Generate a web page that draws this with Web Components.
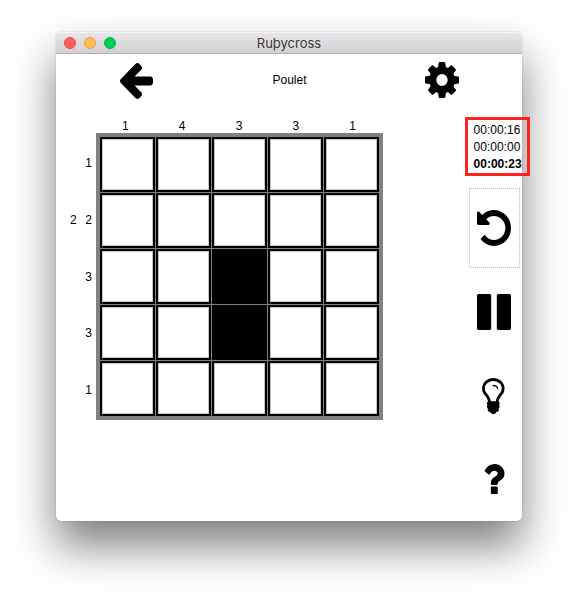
<!DOCTYPE html>
<html lang="en">
<head>
<meta charset="utf-8">
<title>Ruþycross</title>
<style>
html,body{margin:0;background:#fff}
body{width:578px;height:601px;overflow:hidden;font:12px/17px "Liberation Sans",Arial,sans-serif;color:#000}
</style>
</head>
<body>
<app-window caption="Ruþycross">
  <top-bar slot="header"><app-icon name="back"></app-icon><span>Poulet</span><app-icon name="cog"></app-icon></top-bar>
  <cross-board columns="1,4,3,3,1" rows="1;2 2;3;3;1" filled="12,17"></cross-board>
  <side-panel slot="side">
    <timer-box slot="timer"><span>00:00:16</span><span>00:00:00</span><b>00:00:23</b></timer-box>
    <tool-button focused><app-icon name="undo"></app-icon></tool-button>
    <tool-button><app-icon name="pause"></app-icon></tool-button>
    <tool-button><app-icon name="bulb"></app-icon></tool-button>
    <tool-button><app-icon name="help"></app-icon></tool-button>
  </side-panel>
</app-window>
<script>
const define = (name, template, setup) => customElements.define(name, class extends HTMLElement {
  connectedCallback() {
    if (this.shadowRoot) return;
    this.attachShadow({ mode: 'open' }).innerHTML = template;
    if (setup) setup(this, this.shadowRoot);
  }
});

define('app-window', `<style>
:host{display:flex;flex-direction:column;box-sizing:border-box;width:466px;height:489px;margin:32px 0 0 56px;background:#fff;border-radius:5px;box-shadow:0 0 1px rgba(0,0,0,.5),0 25px 44px rgba(0,0,0,.5)}
.title{display:grid;grid-template-columns:1fr auto 1fr;align-items:center;box-sizing:border-box;height:22px;flex:none;padding:0 8px;border-bottom:1px solid #b1afb1;border-radius:5px 5px 0 0;background:linear-gradient(#e9e7e9,#d2d0d2);box-shadow:inset 0 1px #f5f4f5;font:13px/21px Inter,sans-serif;color:#3b393b}
#t{padding-top:2px;line-height:19px}
.lights{display:flex;gap:8px}
i{box-sizing:border-box;width:12px;height:12px;border-radius:50%;border:1px solid #e2484a;background:#ff5f5c}
i:nth-child(2){background:#ffbe4f;border-color:#dfa046}
i:nth-child(3){background:#00ce57;border-color:#12ac4c}
.body{display:grid;grid-template-columns:409px 1fr;grid-template-rows:63px 1fr;flex:1}
.head{grid-column:1/3}
</style>
<div class="title"><div class="lights"><i></i><i></i><i></i></div><span id="t"></span></div>
<div class="body"><slot class="head" name="header"></slot><slot></slot><slot name="side"></slot></div>`,
(el, root) => { root.getElementById('t').textContent = el.getAttribute('caption'); });

define('top-bar', `<style>
:host{display:grid;grid-template-columns:34px 1fr 34px;align-items:center;grid-column:1/3;height:51px;padding:0 63px 0 64px;text-align:center}
::slotted(span){padding-top:2px}
</style><slot></slot>`);

define('cross-board', `<style>
:host{display:grid;grid-template-columns:36px 287px;grid-template-rows:16px 287px;column-gap:4px}
.cols{grid-column:2;display:grid;grid-template-columns:repeat(5,56.8px);padding:1px 0 0 1px;text-align:center}
.rows{display:grid;grid-template-rows:repeat(5,56.7px);align-items:center;padding-top:2.4px}
.rows div{display:flex;justify-content:flex-end;gap:8.6px}
.grid{display:grid;grid-template-columns:repeat(5,55px);grid-auto-rows:55px;gap:1px;padding:4px;background:#808080}
.cell{box-sizing:border-box;background:#fff;border:2px solid #000;box-shadow:inset 0 0 0 1px #c6c6c6}
.on{background:#000;box-shadow:none}
</style><div class="cols"></div><div class="rows"></div><div class="grid"></div>`,
(el, root) => {
  const list = (name, sep) => el.getAttribute(name).split(sep);
  const spans = items => items.map(n => `<span>${n}</span>`).join('');
  const filled = new Set(list('filled', ',').map(Number));
  root.querySelector('.cols').innerHTML = spans(list('columns', ','));
  root.querySelector('.rows').innerHTML = list('rows', ';').map(r => `<div>${spans(r.split(' '))}</div>`).join('');
  root.querySelector('.grid').innerHTML = Array.from({ length: 25 }, (_, i) => `<div class="cell${filled.has(i) ? ' on' : ''}"></div>`).join('');
});

define('side-panel', `<style>
:host{display:flex;flex-direction:column;min-width:0}
.tools{display:grid;grid-auto-rows:80px;gap:4px;width:51px;margin:12px 0 0 4px}
</style><slot name="timer"></slot><div class="tools"><slot></slot></div>`);

define('timer-box', `<style>
:host{display:flex;flex-direction:column;box-sizing:border-box;width:65px;height:59px;border:3px solid #ff2020;padding:2px 0 0 5.6px;white-space:nowrap}
</style><slot></slot>`);

define('tool-button', `<style>
:host{display:flex;align-items:center;justify-content:center;box-sizing:border-box;padding-right:1px;border:1px dotted transparent}
:host([focused]){border-color:#bbb}
</style><slot></slot>`);

const ICONS = {
  back: { box: '192 91 1472 1610', w: 33, h: 37, d: 'M1664 896v128q0 53-32.5 90.5t-84.5 37.5h-704l293 294q38 36 38 90t-38 90l-75 76q-37 37-90 37-52 0-91-37l-651-652q-37-37-37-90 0-52 37-91l651-650q38-38 91-38 52 0 90 38l75 74q38 38 38 91t-38 91l-293 293h704q52 0 84.5 37.5t32.5 90.5z' },
  cog: { box: '128 128 1536 1536', w: 34, h: 36, d: 'M1152 896q0-106-75-181t-181-75-181 75-75 181 75 181 181 75 181-75 75-181zm512-109v222q0 12-8 23t-20 13l-185 28q-19 54-39 91 35 50 107 138 10 12 10 25t-9 23q-27 37-99 108t-94 71q-12 0-26-9l-138-108q-44 23-91 38-16 136-29 186-7 28-36 28h-222q-14 0-24.5-8.5t-11.5-21.5l-28-184q-49-16-90-37l-141 107q-10 9-25 9-14 0-25-11-126-114-165-168-7-10-7-23 0-12 8-23 15-21 51-66.5t54-70.5q-27-50-41-99l-183-27q-13-2-21-12.5t-8-23.5v-222q0-12 8-23t19-13l186-28q14-46 39-92-40-57-107-138-10-12-10-24 0-10 9-23 26-36 98.5-107.5t94.5-71.5q13 0 26 10l138 107q44-23 91-38 16-136 29-186 7-28 36-28h222q14 0 24.5 8.5t11.5 21.5l28 184q49 16 90 37l142-107q9-9 24-9 13 0 25 10 129 119 165 170 7 8 7 22 0 12-8 23-15 21-51 66.5t-54 70.5q26 50 41 98l183 28q13 2 21 12.5t8 23.5z' },
  undo: { box: '128 128 1536 1536', w: 34, h: 36, d: 'M1664 896q0 156-61 298t-164 245-245 164-298 61q-172 0-327-72.5t-264-204.5q-7-10-6.5-22.5t8.5-20.5l137-138q10-9 25-9 16 2 23 12 73 95 179 147t225 52q104 0 198.5-40.5t163.5-109.5 109.5-163.5 40.5-198.5-40.5-198.5-109.5-163.5-163.5-109.5-198.5-40.5q-98 0-188 35.5t-160 101.5l137 138q31 30 14 69-17 40-59 40h-448q-26 0-45-19t-19-45v-448q0-42 40-59 39-17 69 14l130 129q107-101 244.5-156.5t284.5-55.5q156 0 298 61t245 164 164 245 61 298z' },
  pause: { box: '128 128 1536 1536', w: 34, h: 36, d: 'M1664 192v1408q0 26-19 45t-45 19h-512q-26 0-45-19t-19-45v-1408q0-26 19-45t45-19h512q26 0 45 19t19 45zm-896 0v1408q0 26-19 45t-45 19h-512q-26 0-45-19t-19-45v-1408q0-26 19-45t45-19h512q26 0 45 19t19 45z' },
  bulb: { box: '384 128 1088 1536', w: 24, h: 36, d: 'M1120 576q0 13-9.5 22.5t-22.5 9.5-22.5-9.5-9.5-22.5q0-46-54-71t-106-25q-13 0-22.5-9.5t-9.5-22.5 9.5-22.5 22.5-9.5q50 0 99.5 16t87 54 37.5 90zm160 0q0-72-34.5-134t-90-101.5-123-62-136.5-22.5-136.5 22.5-123 62-90 101.5-34.5 134q0 101 68 180 10 11 30.5 33t30.5 33q128 153 141 298h228q13-145 141-298 10-11 30.5-33t30.5-33q68-79 68-180zm128 0q0 155-103 268-45 49-74.5 87t-59.5 95.5-34 107.5q47 28 47 82 0 37-25 64 25 27 25 64 0 52-45 81 13 23 13 47 0 46-31.5 71t-77.5 25q-20 44-60 70t-87 26-87-26-60-70q-46 0-77.5-25t-31.5-71q0-24 13-47-45-29-45-81 0-37 25-64-25-27-25-64 0-54 47-82-4-50-34-107.5t-59.5-95.5-74.5-87q-103-113-103-268 0-99 44.5-184.5t117-142 164-89 186.5-32.5 186.5 32.5 164 89 117 142 44.5 184.5z' },
  help: { box: '448 256 956 1344', w: 20.5, h: 31.5, d: 'M1088 1256v240q0 16-12 28t-28 12h-240q-16 0-28-12t-12-28v-240q0-16 12-28t28-12h240q16 0 28 12t12 28zm316-600q0 54-15.5 101t-35 76.5-55 59.5-57.5 43.5-61 35.5q-41 23-68.5 65t-27.5 67q0 17-12 32.5t-28 15.5h-240q-15 0-25.5-18.5t-10.5-37.5v-45q0-83 65-156.5t143-108.5q59-27 84-56t25-76q0-42-46.5-74t-107.5-32q-65 0-108 29-35 25-107 115-13 16-31 16-12 0-25-8l-164-125q-13-10-15.5-25t5.5-28q160-266 464-266 80 0 161 31t146 83 106 127.5 41 158.5z' }
};

define('app-icon', `<style>:host{display:block}svg{display:block;overflow:visible}</style>
<svg preserveAspectRatio="none" aria-hidden="true"><path fill="currentColor"/></svg>`,
(el, root) => {
  const icon = ICONS[el.getAttribute('name')], svg = root.querySelector('svg');
  svg.setAttribute('viewBox', icon.box);
  svg.setAttribute('width', icon.w);
  svg.setAttribute('height', icon.h);
  svg.firstElementChild.setAttribute('d', icon.d);
});
</script>
</body>
</html>
